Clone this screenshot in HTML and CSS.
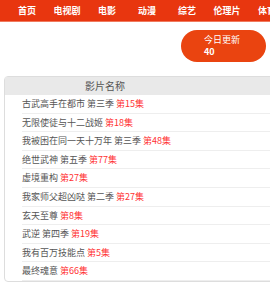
FILE: index.html
```html
<!DOCTYPE html>
<html lang="zh-CN">
<head>
    <meta charset="UTF-8">
    <meta name="viewport" content="width=device-width, initial-scale=1.0">
    <title>今日更新</title>
    <link rel="stylesheet" href="styles.css">
</head>
<body>
    <div class="nav">
        <a href="#">首页</a>
        <a href="#">电视剧</a>
        <a href="#">电影</a>
        <a href="#">动漫</a>
        <a href="#">综艺</a>
        <a href="#">伦理片</a>
        <a href="#">体育</a>
    </div>

    <div class="today">
        <div class="today-btn">
            <span>今日更新</span>
            <b>40</b>
        </div>
    </div>

    <div class="list">
        <div class="list-head">
            <div class="col-name">影片名称</div>
        </div>
        <ul>
            <li>古武高手在都市 第三季 <em>第15集</em></li>
            <li>无限使徒与十二战姬 <em>第18集</em></li>
            <li>我被困在同一天十万年 第三季 <em>第48集</em></li>
            <li>绝世武神 第五季 <em>第77集</em></li>
            <li>虚境重构 <em>第27集</em></li>
            <li>我家师父超凶哒 第二季 <em>第27集</em></li>
            <li>玄天至尊 <em>第8集</em></li>
            <li>武逆 第四季 <em>第19集</em></li>
            <li>我有百万技能点 <em>第5集</em></li>
            <li>最终魂意 <em>第66集</em></li>
        </ul>
    </div>
</body>
</html>
```

FILE: styles.css
```css
html, body {
    overflow: hidden;
}

body {
    margin: 0;
    padding: 0;
    background-color: #fff;
    font-family: "Noto Sans CJK SC", "Noto Sans", sans-serif;
    font-size: 9px;
}

.nav {
    display: flex;
    height: 21px;
    padding-left: 7px;
    background-color: #e8360f;
    border-bottom: 1px solid #f07a5e;
    overflow: hidden;
}
.nav a {
    flex-shrink: 0;
    width: 40px;
    line-height: 21px;
    text-align: center;
    color: #fff;
    font-weight: bold;
    text-decoration: none;
}

.today {
    display: flex;
    justify-content: flex-end;
    padding: 8px 4px 0 0;
}
.today-btn {
    display: flex;
    flex-direction: column;
    width: 62px;
    padding: 4px 0 4px 23px;
    line-height: 12px;
    background-color: #ea4410;
    border-radius: 16px;
    color: #fff;
}

.list {
    width: 320px;
    margin: 14px 0 0 4px;
    border: 1px solid #ddd;
    border-radius: 4px;
}
.list-head {
    display: flex;
    height: 18px;
    line-height: 18px;
    background-color: #e9e9e9;
    color: #555;
    font-size: 10px;
}
.col-name {
    width: 200px;
    text-align: center;
}
.list ul {
    list-style: none;
    margin: 0;
    padding: 0 0 0 17px;
}
.list li {
    line-height: 17.6px;
    border-bottom: 1px solid #eee;
    color: #555;
}
.list li em {
    font-style: normal;
    color: #ff3333;
}
```
